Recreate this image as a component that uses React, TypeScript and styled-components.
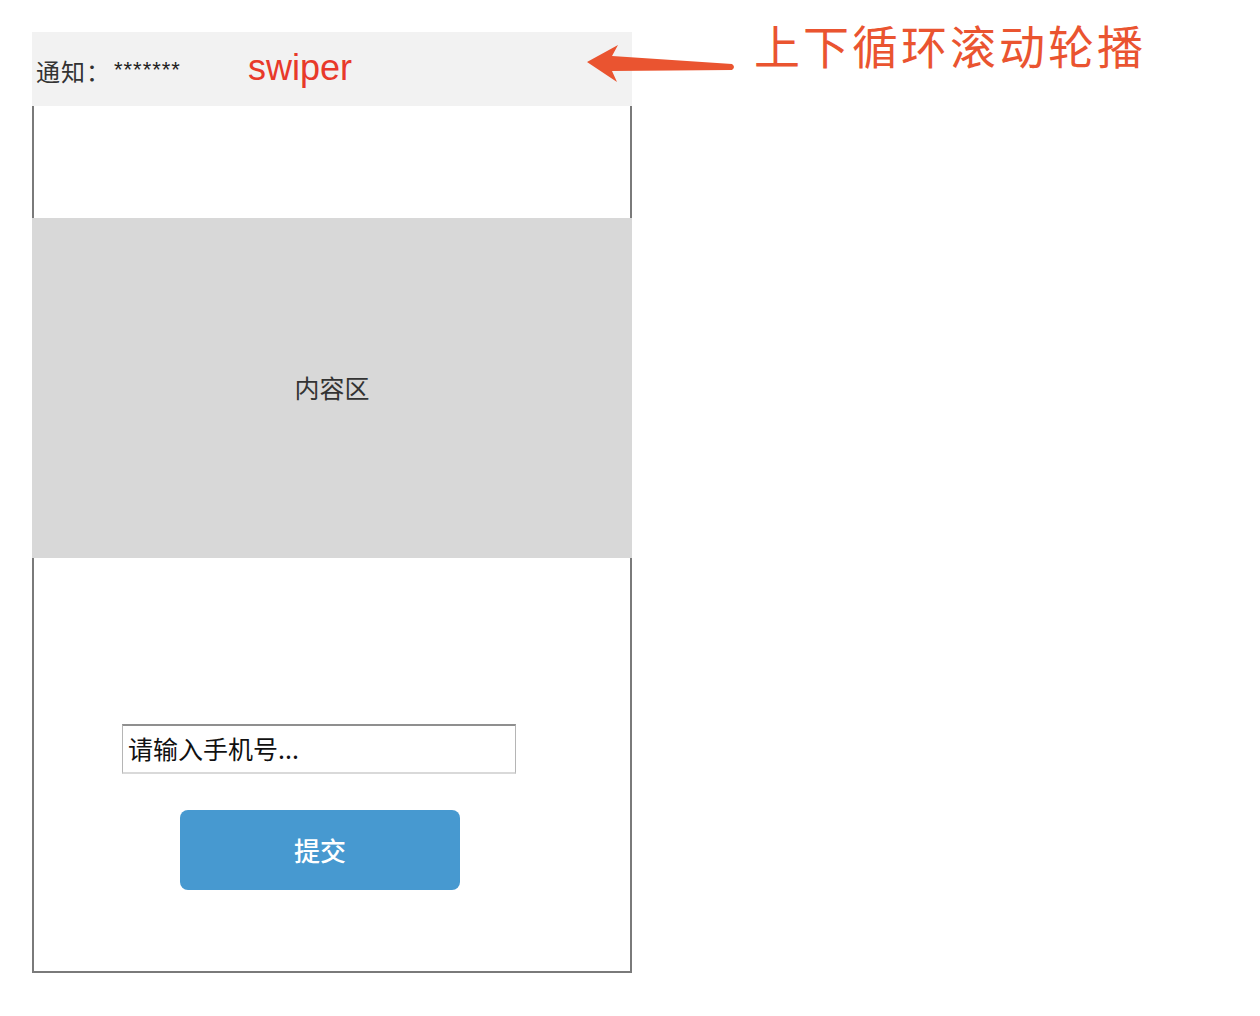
import React from "react";
import styled, { createGlobalStyle } from "styled-components";

const Global = createGlobalStyle`
  html, body { margin: 0; padding: 0; background: #ffffff; }
  body { font-family: "Noto Sans CJK SC", "Liberation Sans", sans-serif; }
`;

const Page = styled.div`
  position: relative;
  width: 1260px;
  height: 1016px;
  padding: 32px 0 0 32px;
  box-sizing: border-box;
`;

const Phone = styled.div`
  width: 600px;
  display: flex;
  flex-direction: column;
`;

const TopBar = styled.div`
  height: 74px;
  background: #f2f2f2;
  display: flex;
  align-items: center;
  padding-left: 4px;
  box-sizing: border-box;
`;

const Label = styled.span`
  font-family: "Noto Sans CJK SC", sans-serif;
  font-size: 24px;
  color: #333;
  line-height: 1;
  margin-top: 4px;
  letter-spacing: 1px;
`;

const Stars = styled.span`
  font-family: "Liberation Sans", Arial, sans-serif;
  font-size: 22px;
  color: #222;
  letter-spacing: 1px;
  margin-left: 3px;
  margin-top: 2px;
`;

const Swiper = styled.span`
  font-family: "Liberation Sans", Arial, sans-serif;
  font-size: 36px;
  color: #e8392a;
  margin-left: 67px;
  margin-bottom: 2px;
`;

const Body = styled.div`
  height: 867px;
  border: 2px solid #7a7a7a;
  border-top: none;
  box-sizing: border-box;
  display: flex;
  flex-direction: column;
`;

const Spacer = styled.div<{ $h: number }>`
  height: ${(p) => p.$h}px;
  flex-shrink: 0;
`;

const Content = styled.div`
  height: 340px;
  margin: 0 -2px;
  background: #d8d8d8;
  display: flex;
  align-items: center;
  justify-content: center;
  font-size: 25px;
  color: #333;
  padding-bottom: 2px;
  box-sizing: border-box;
`;

const InputRow = styled.div`
  padding-left: 88px;
  display: flex;
`;

const PhoneInput = styled.input`
  width: 394px;
  height: 50px;
  box-sizing: border-box;
  border-style: solid;
  border-width: 2px 1px 2px 1px;
  border-color: #8f8f8f #b5b5b5 #d9d9d9 #b5b5b5;
  padding: 0 0 2px 5px;
  font-family: "Noto Sans CJK SC", sans-serif;
  font-size: 25px;
  color: #111;
  outline: none;
  &::placeholder { color: #111; opacity: 1; }
`;

const ButtonRow = styled.div`
  padding-left: 146px;
  margin-top: 36px;
  display: flex;
`;

const SubmitButton = styled.button`
  width: 280px;
  height: 80px;
  border: none;
  border-radius: 8px;
  background: #4799d0;
  color: #ffffff;
  font-family: "Noto Sans CJK SC", sans-serif;
  font-size: 26px;
  font-weight: 500;
  padding-bottom: 2px;
  cursor: pointer;
`;

const Annotation = styled.div`
  position: absolute;
  left: 585px;
  top: 21px;
  display: flex;
  align-items: flex-start;
`;

const Arrow = styled.svg`
  margin-top: 21px;
  flex-shrink: 0;
`;

const AnnotationText = styled.span`
  font-family: "Noto Sans CJK SC", sans-serif;
  font-size: 46px;
  color: #ea5430;
  margin-left: 17px;
  line-height: 1;
  letter-spacing: 3px;
`;

export default function App() {
  return (
    <>
      <Global />
      <Page>
        <Phone>
          <TopBar>
            <Label>通知：</Label>
            <Stars>*******</Stars>
            <Swiper>swiper</Swiper>
          </TopBar>
          <Body>
            <Spacer $h={112} />
            <Content>内容区</Content>
            <Spacer $h={166} />
            <InputRow>
              <PhoneInput placeholder="请输入手机号..." />
            </InputRow>
            <ButtonRow>
              <SubmitButton>提交</SubmitButton>
            </ButtonRow>
          </Body>
        </Phone>
        <Annotation>
          <Arrow width="152" height="44" viewBox="0 0 152 44">
            <path
              d="M2 20 L33 3 L27 14 L147 22 Q151 25 147 28 L27 29 L32 40 Z"
              fill="#ea5430"
            />
          </Arrow>
          <AnnotationText>上下循环滚动轮播</AnnotationText>
        </Annotation>
      </Page>
    </>
  );
}
